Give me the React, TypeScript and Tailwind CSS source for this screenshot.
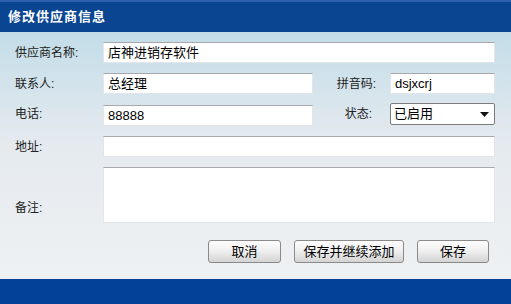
import { useState } from "react"

const font = { fontFamily: '"Liberation Sans", "Noto Sans CJK SC", sans-serif' }

function Field({ value, className = "" }: { value?: string; className?: string }) {
  return (
    <div
      className={`h-[21px] bg-white border border-[#e2e6ea] border-t-[#a8a8ac] flex items-center px-[4px] text-[13px] text-black leading-none ${className}`}
    >
      {value}
    </div>
  )
}

function Btn({ label, w }: { label: string; w: string }) {
  return (
    <button
      className={`${w} h-[23px] rounded-[3px] border border-[#8a8a8a] bg-gradient-to-b from-[#fdfdfd] via-[#eeeeee] to-[#d4d4d4] text-[13px] text-black leading-none flex items-center justify-center`}
    >
      {label}
    </button>
  )
}

export default function App() {
  const [status] = useState("已启用")

  return (
    <div className="w-[511px] h-[304px] flex flex-col overflow-hidden" style={font}>
      {/* Header */}
      <div className="h-[32px] shrink-0 bg-[#0a4592] border-t-2 border-[#2c62ad] flex items-center pl-[8px]">
        <span className="text-white font-bold text-[13px] tracking-[1px]">修改供应商信息</span>
      </div>

      {/* Body */}
      <div className="flex-1 bg-gradient-to-b from-[#c3dde8] via-[#e5eaef] via-45% to-[#eef1f3] pr-[16px] pt-[10px] text-[12px] text-[#222]">
        <div className="flex items-center h-[21px]">
          <div className="w-[103px] pl-[15px]">供应商名称:</div>
          <Field value="店神进销存软件" className="flex-1" />
        </div>

        <div className="flex items-center h-[21px] mt-[10px]">
          <div className="w-[103px] pl-[15px]">联系人:</div>
          <Field value="总经理" className="w-[210px]" />
          <div className="w-[77px] text-right pr-[14px]">拼音码:</div>
          <Field value="dsjxcrj" className="flex-1 text-[12px]" />
        </div>

        <div className="flex items-center h-[22px] mt-[9px]">
          <div className="w-[103px] pl-[15px]">电话:</div>
          <Field value="88888" className="w-[210px] mt-[2px] text-[12px]" />
          <div className="w-[77px] text-right pr-[18px]">状态:</div>
          <div className="flex-1 h-[22px] bg-white border border-[#7c7c7c] rounded-[2px] flex items-center justify-between pl-[3px] pr-[5px] text-[13px] text-black">
            <span>{status}</span>
            <svg width="9" height="5" viewBox="0 0 9 5">
              <path d="M0 0 H9 L4.5 5 Z" fill="#111" />
            </svg>
          </div>
        </div>

        <div className="flex items-center h-[21px] mt-[11px]">
          <div className="w-[103px] pl-[15px]">地址:</div>
          <Field className="flex-1" />
        </div>

        <div className="flex items-center h-[56px] mt-[10px]">
          <div className="w-[103px] pl-[15px] pt-[26px]">备注:</div>
          <div className="flex-1 h-[56px] bg-white border border-[#e2e6ea] border-t-[#a8a8ac]" />
        </div>

        <div className="flex justify-end gap-[13px] mt-[17px] pr-[6px]">
          <Btn label="取消" w="w-[73px]" />
          <Btn label="保存并继续添加" w="w-[110px]" />
          <Btn label="保存" w="w-[72px]" />
        </div>
      </div>

      {/* Footer */}
      <div className="h-[25px] shrink-0 bg-[#034198]" />
    </div>
  )
}
